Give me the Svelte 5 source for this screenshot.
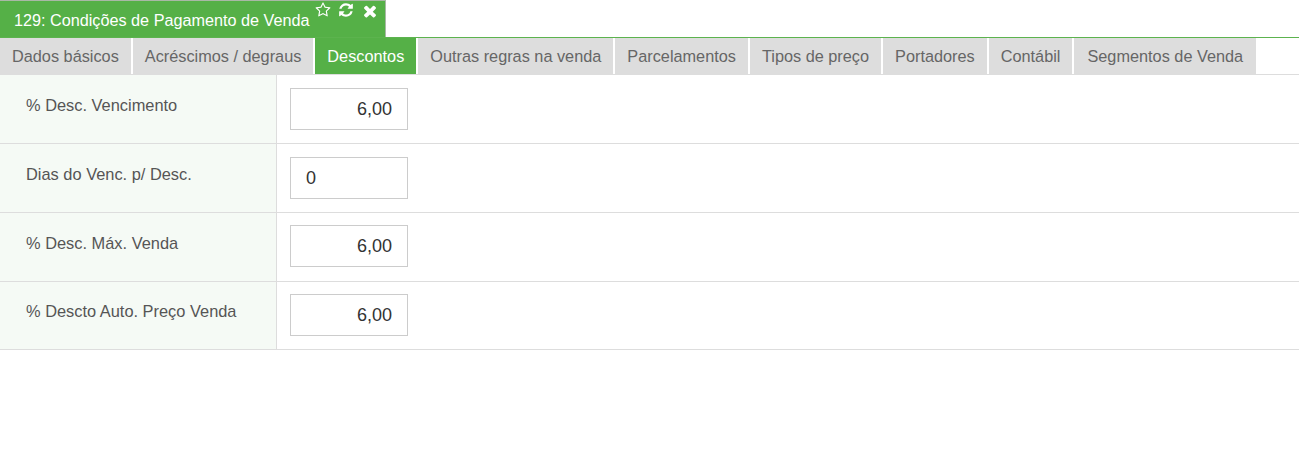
<script>
	const tabs = [
		'Dados básicos',
		'Acréscimos / degraus',
		'Descontos',
		'Outras regras na venda',
		'Parcelamentos',
		'Tipos de preço',
		'Portadores',
		'Contábil',
		'Segmentos de Venda'
	];
	const active = 'Descontos';
	const rows = [
		{ label: '% Desc. Vencimento', value: '6,00', right: true },
		{ label: 'Dias do Venc. p/ Desc.', value: '0', right: false },
		{ label: '% Desc. Máx. Venda', value: '6,00', right: true },
		{ label: '% Descto Auto. Preço Venda', value: '6,00', right: true }
	];
</script>

<div class="window">
	<header class="title-bar">
		<div class="title-tab">
			<span class="title">129: Condições de Pagamento de Venda</span>
			<div class="actions">
				<svg class="icon" viewBox="0 0 1792 1792" aria-label="Favoritar">
					<path d="M1201 1004l306-297-422-62-189-382-189 382-422 62 306 297-73 421 378-199 377 199zm527-357q0 22-26 48l-363 354 86 500q1 7 1 20 0 50-41 50-19 0-40-12l-449-236-449 236q-22 12-40 12-21 0-31.5-14.5t-10.5-35.5q0-6 2-20l86-500-364-354q-25-27-25-48 0-37 56-46l502-73 225-455q19-41 49-41t49 41l225 455 502 73q56 9 56 46z" />
				</svg>
				<svg class="icon" viewBox="0 0 1792 1792" aria-label="Atualizar">
					<path d="M1639 1056q0 5-1 7-64 268-268 434.5t-478 166.5q-146 0-282.5-55t-243.5-157l-129 129q-19 19-45 19t-45-19-19-45v-448q0-26 19-45t45-19h448q26 0 45 19t19 45-19 45l-137 137q71 66 161 102t187 36q134 0 250-65t186-179q11-17 53-117 8-23 30-23h192q13 0 22.5 9.5t9.5 22.5zm25-800v448q0 26-19 45t-45 19h-448q-26 0-45-19t-19-45 19-45l138-138q-148-137-349-137-134 0-250 65t-186 179q-11 17-53 117-8 23-30 23h-199q-13 0-22.5-9.5t-9.5-22.5v-7q65-268 270-434.5t480-166.5q146 0 284 55.5t245 156.5l130-129q19-19 45-19t45 19 19 45z" />
				</svg>
				<svg class="icon close" viewBox="0 0 1792 1792" aria-label="Fechar">
					<path d="M1490 1322q0 40-28 68l-136 136q-28 28-68 28t-68-28l-294-294-294 294q-28 28-68 28t-68-28l-136-136q-28-28-28-68t28-68l294-294-294-294q-28-28-28-68t28-68l136-136q28-28 68-28t68 28l294 294 294-294q28-28 68-28t68 28l136 136q28 28 28 68t-28 68l-294 294 294 294q28 28 28 68z" />
				</svg>
			</div>
		</div>
	</header>

	<nav class="tabs">
		{#each tabs as tab}
			<button class="tab" class:active={tab === active}>{tab}</button>
		{/each}
	</nav>

	<section class="form">
		{#each rows as row}
			<div class="row">
				<div class="label">{row.label}</div>
				<div class="field">
					<input class:right={row.right} type="text" value={row.value} />
				</div>
			</div>
		{/each}
	</section>
</div>

<style>
	:global(body) {
		background: #fff;
	}
	.window {
		font-family: 'Liberation Sans', Arial, sans-serif;
		font-size: 16.4px;
		color: #555;
	}
	.title-bar {
		display: flex;
		height: 37px;
		border-bottom: 1px solid #5cb34e;
	}
	.title-tab {
		display: flex;
		width: 386px;
		height: 37px;
		box-sizing: border-box;
		padding-left: 14px;
		background: #55b047;
		border-top: 1px solid #a9b8a6;
		border-right: 1px solid #a9b8a6;
		color: #fff;
	}
	.title {
		margin-top: 10px;
		font-size: 16.22px;
		line-height: 18px;
		white-space: nowrap;
	}
	.actions {
		display: flex;
		gap: 7px;
		margin: 1px 0 0 5px;
	}
	.icon {
		width: 16px;
		height: 16px;
		fill: #fff;
	}
	.icon.close {
		width: 18px;
		height: 18px;
	}
	.tabs {
		display: flex;
		height: 36.25px;
		border-bottom: 1px solid #ddd;
		font-size: 16.3px;
	}
	.tab {
		margin: 0 2px 0 0;
		padding: 1px 12px 0;
		border: 0;
		background: #ddd;
		color: #666;
		font: inherit;
		white-space: nowrap;
	}
	.tab:last-child {
		padding: 1px 13px 0;
	}
	.tab.active {
		background: #55b047;
		color: #fff;
	}
	.row {
		display: flex;
		height: 68.75px;
		box-sizing: border-box;
		border-bottom: 1px solid #ddd;
	}
	.label {
		width: 277px;
		box-sizing: border-box;
		padding: 20.9px 0 0 26px;
		background: #f5faf5;
		border-right: 1px solid #ddd;
		line-height: 18px;
	}
	.field {
		padding: 12.6px 0 0 13px;
	}
	input {
		display: block;
		width: 118px;
		height: 42px;
		box-sizing: border-box;
		padding: 1px 15px 0;
		border: 1px solid #ccc;
		border-radius: 0;
		outline: 0;
		background: #fff;
		color: #333;
		font-family: inherit;
		font-size: 18px;
	}
	input.right {
		text-align: right;
	}
</style>
